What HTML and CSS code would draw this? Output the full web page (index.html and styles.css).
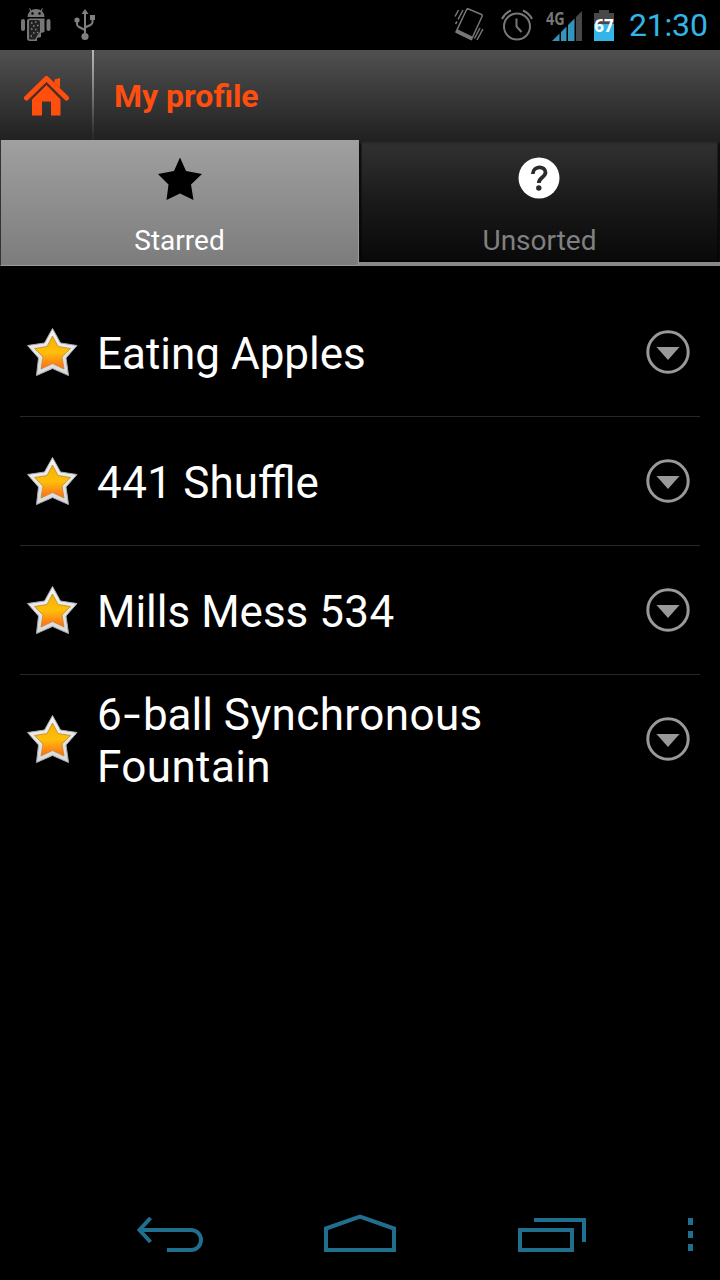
FILE: index.html
```html
<!DOCTYPE html>
<html lang="en">
  <head>
    <meta charset="UTF-8" />
    <meta name="viewport" content="width=device-width, initial-scale=1.0" />
    <title>My profile</title>
    <link rel="stylesheet" href="styles.css">
  </head>
  <body>
    <!-- shared icons -->
    <svg class="defs" width="0" height="0">
      <defs>
        <linearGradient id="gold" x1="0" y1="0" x2="0" y2="1">
          <stop offset="0" stop-color="#f2b200" />
          <stop offset="0.5" stop-color="#ffbe0a" />
          <stop offset="1" stop-color="#ff6a1c" />
        </linearGradient>
        <linearGradient id="silver" x1="0" y1="0" x2="0" y2="1">
          <stop offset="0" stop-color="#f4f4f4" />
          <stop offset="1" stop-color="#d6d8dc" />
        </linearGradient>
        <symbol id="star" viewBox="0 0 52 50">
          <path d="M26.500 1.500 L34.500 16 L51 18.500 L40 31 L42.500 48.500 L26.500 41.500 L10.500 48.500 L12.500 31 L1.500 18.500 L18.500 16 Z" fill="url(#silver)" stroke="#aaa" stroke-width="1" stroke-linejoin="round" />
          <path d="M26.500 9 L32 19.500 L44.500 21.500 L36 30 L38 42 L26.500 36.500 L15 42 L17 30 L8.500 21.500 L21 19.500 Z" fill="url(#gold)" stroke="#c08a28" stroke-width=".8" />
        </symbol>
        <symbol id="more" viewBox="0 0 44 44">
          <circle cx="22" cy="22" r="20.2" fill="none" stroke="#999" stroke-width="3" />
          <path d="M10.500 17 H33.500 L22 30 Z" fill="#999" />
        </symbol>
      </defs>
    </svg>

    <div id="status">
      <svg class="android" width="30" height="34" viewBox="0 0 30 34" fill="#777">
        <path d="M6.500 9 A8.500 8 0 0 1 23.500 9 Z" />
        <path d="M10 3 L8.500 .5 M20 3 L21.500 .5" stroke="#777" stroke-width="1.200" />
        <circle cx="11.500" cy="5.500" r="1.200" fill="#000" />
        <circle cx="18.500" cy="5.500" r="1.200" fill="#000" />
        <rect x="0" y="11" width="4" height="12" rx="2" />
        <rect x="25.500" y="11" width="4" height="12" rx="2" />
        <path d="M6 13 Q6 10.500 9 10.500 H23.500 V24 L20 25 V29 L16 30 V33 H9 Q6 33 6 30 Z" />
        <path d="M8 13 Q8 12 9 12 H17 Q19 12 19 14 V24 L16 28 L14 31.500 H9 Q8 31.500 8 30 Z" fill="#222" />
        <path d="M10 15 h1.500 M14 14 h1.500 M12 18 h1.500 M16 17.500 h1.500 M10 21 h1.500 M14 21.500 h1.500 M12 25 h1.500 M9.500 28 h1.500 M16 24.500 h1.500" stroke="#888" stroke-width="1.500" />
      </svg>
      <svg class="usb" width="22" height="34" viewBox="0 0 22 34" fill="none" stroke="#808080" stroke-width="2">
        <path d="M11 5 V27 M3 13 V16 Q3 18 5 19 L11 22 M18.500 9 V14 Q18.500 16 16.500 17 L11 19.500" />
        <path d="M11 1 L14.500 6 H7.500 Z M16 7 H21 V12 H16 Z" fill="#808080" stroke="none" />
        <circle cx="3" cy="12" r="2.600" fill="#808080" stroke="none" />
        <circle cx="11" cy="28.500" r="3.600" fill="#808080" stroke="none" />
      </svg>
      <div class="indicators">
        <svg class="vibrate" width="30" height="34" viewBox="0 0 30 34" fill="none" stroke="#777" stroke-width="1.500">
          <path d="M14.500 1 L27.500 6.500 Q28.500 7 28 8.500 L17.500 31.500 L2 24 L12.500 1.800 Q13.200 .5 14.500 1 Z" />
          <path d="M2.500 23 L18 30.500" stroke-width="4" />
          <path d="M1 8.500 L4.500 2 M4 11.500 L9 2 M1.500 16 L3 13.500 M29 21 L23 32 M26 20 L20.500 30.500" />
        </svg>
        <svg class="alarm" width="32" height="32" viewBox="0 0 32 32" fill="none" stroke="#777" stroke-width="2">
          <circle cx="16" cy="17.500" r="13" />
          <path d="M15.500 9.500 V17.500 L20.500 23 M1 10 Q4 4 10 1.500 M22 1.500 Q28 4 31 10" />
        </svg>
        <div class="signal">
          <span class="network">4G</span>
          <svg width="30" height="30" viewBox="0 0 30 30" fill="#3594bb">
            <path d="M0 30 L7.500 22.500 V30 Z M9 21 L14.500 15.500 V30 H9 Z M16 14 L22.500 7.500 V30 H16 Z" />
            <path d="M24 6 L30 0 V30 H24 Z" fill="#484848" />
          </svg>
        </div>
        <div class="battery"><span>67</span></div>
        <span class="clock">21:30</span>
      </div>
    </div>

    <div id="header">
      <div class="home">
        <svg width="46" height="42" viewBox="0 0 46 42" fill="#ff4e0d">
          <path d="M30.500 5.500 L36 4 V14 L30.500 9 Z" />
          <path d="M2.500 24 L22.500 4.500 L42.500 24" fill="none" stroke="#ff4e0d" stroke-width="5" stroke-linecap="round" stroke-linejoin="round" />
          <path d="M8 25.500 L22.500 11 L36.500 25.500 V41.500 H27 V27.500 H18 V41.500 H8 Z" />
          <path d="M6 26 L22.500 9.800 L39 26" fill="none" stroke="#5a2b18" stroke-width="1.500" />
        </svg>
      </div>
      <h1>My profile</h1>
    </div>

    <ul id="tabs">
      <li class="active">
        <svg width="44" height="44" viewBox="0 0 44 44">
          <path d="M22 .5 L28 14 L44 17 L33 27.500 L35.500 43 L22 36.500 L8.500 43 L10.500 27.500 L0 17 L16 14 Z" />
        </svg>
        <span>Starred</span>
      </li>
      <li>
        <svg width="44" height="44" viewBox="0 0 44 44">
          <circle cx="21" cy="21" r="20.500" fill="#fff" />
          <path d="M14.800 17 C15 8.500 27.500 8.500 27.500 15.500 C27.500 20 20.800 20.500 20.800 26" fill="none" stroke="#2a2a2a" stroke-width="3.800" />
          <circle cx="20.800" cy="31" r="2.700" fill="#2a2a2a" />
        </svg>
        <span>Unsorted</span>
      </li>
    </ul>

    <ul id="list">
      <li>
        <svg class="star"><use href="#star" /></svg>
        <span class="title">Eating Apples</span>
        <svg class="more"><use href="#more" /></svg>
      </li>
      <li>
        <svg class="star"><use href="#star" /></svg>
        <span class="title"><span class="wide">441</span> Shuffle</span>
        <svg class="more"><use href="#more" /></svg>
      </li>
      <li>
        <svg class="star"><use href="#star" /></svg>
        <span class="title">Mills Mess <span class="wide">534</span></span>
        <svg class="more"><use href="#more" /></svg>
      </li>
      <li>
        <svg class="star"><use href="#star" /></svg>
        <span class="title">6<span class="hyphen">-</span>ball <span class="wide">Synchronous</span> <span class="wide">Fountain</span></span>
        <svg class="more"><use href="#more" /></svg>
      </li>
    </ul>

    <div id="navbar">
      <svg class="back" width="66" height="36" viewBox="0 0 66 36">
        <path d="M3 14 H54 A10 10 0 0 1 54 34 H30" />
        <path d="M13.500 2 L2.500 14 L13.500 26" />
      </svg>
      <svg class="go-home" width="72" height="38" viewBox="0 0 72 38">
        <path d="M2 14.500 L36 2.500 L70 14.500 V36 H2 Z" />
      </svg>
      <svg class="recent" width="68" height="34" viewBox="0 0 68 34">
        <path d="M2 12 H54 V32 H2 Z M16 2 H66 V24" />
      </svg>
      <svg class="menu" width="5" height="34" viewBox="0 0 5 34">
        <path d="M2.500 0 V7 M2.500 13 V20 M2.500 26 V33" />
      </svg>
    </div>
  </body>
</html>
```
FILE: styles.css
```css
* {
  margin: 0;
  padding: 0;
  box-sizing: border-box;
}
body {
  width: 720px;
  height: 1280px;
  display: flex;
  flex-direction: column;
  overflow: hidden;
  background-color: #000;
  color: #fff;
  font-family: Roboto, "Liberation Sans", sans-serif;
}
ul li {
  list-style: none;
}
svg {
  display: block;
  flex-shrink: 0;
}
.defs {
  position: absolute;
}

/* status bar */
#status {
  height: 50px;
  display: flex;
  align-items: center;
  padding: 0 12px 0 21px;
}
.usb {
  margin-left: 23px;
}
.indicators {
  display: flex;
  align-items: center;
  margin-left: auto;
}
.alarm {
  margin-left: 17px;
}
.signal {
  position: relative;
  width: 37px;
  height: 32px;
  margin-left: 12px;
  display: flex;
  align-items: flex-end;
  justify-content: flex-end;
}
.network {
  position: absolute;
  left: 1px;
  top: 0;
  font: bold 18px/18px "Open Sans", sans-serif;
  color: #777;
  transform: scaleX(0.8);
  transform-origin: left;
}
.battery {
  width: 20px;
  height: 31px;
  margin-left: 12px;
  display: flex;
  align-items: center;
  justify-content: center;
  font: bold 17px/17px "Open Sans", sans-serif;
  background: linear-gradient(#484848, #484848) 50% 0 / 10px 3px no-repeat,
    linear-gradient(#484848 11px, #33b5e5 11px) 0 3px / 20px 28px no-repeat;
}
.clock {
  width: 79px;
  margin-left: 15px;
  font-size: 32px;
  line-height: 40px;
  letter-spacing: -0.2px;
  color: #33b5e5;
}

/* action bar */
#header {
  height: 90px;
  display: flex;
  align-items: center;
  background: linear-gradient(#505050, #212121);
}
.home {
  width: 94px;
  height: 90px;
  padding: 24px 0 0 24px;
  border-right: 2px solid;
  border-image: linear-gradient(#bbb, #777 50%, #2a2a2a 95%) 1;
}
h1 {
  margin: 1px 0 0 20px;
  font-size: 32px;
  line-height: 40px;
  color: #ff4e0d;
}

/* tabs */
#tabs {
  height: 126px;
  display: flex;
}
#tabs > li {
  width: 361px;
  display: flex;
  flex-direction: column;
  align-items: center;
  padding-top: 17px;
  font-size: 28px;
  line-height: 34px;
  color: #808080;
  background: linear-gradient(#323232, #1a1a1a 50%, #080808);
  border-bottom: 4px solid #888;
  box-shadow: inset 0 3px 3px #222, inset 2px 0 2px #000, inset -2px 0 2px #000;
}
#tabs > li > span {
  margin-top: 23px;
}
#tabs > .active {
  width: 359px;
  color: #fff;
  background: linear-gradient(#a0a0a0, #7c7c7c);
  border: solid #999;
  border-width: 0 1px 1px;
  border-left-color: #333;
  box-shadow: none;
}

/* starred patterns */
#list {
  flex: 1;
  padding: 22px 20px 0;
}
#list > li {
  height: 129px;
  display: flex;
  align-items: center;
  padding: 0 10px 0 6px;
  border-bottom: 1px solid #282828;
  font-size: 44px;
  line-height: 52px;
}
#list > li:last-child {
  border-bottom-color: transparent;
}
.title {
  width: 450px;
  margin: 4px auto 0 19px;
}
.wide {
  letter-spacing: 0.4px;
}
.hyphen {
  display: inline-block;
  margin: 0 5px 0 4px;
  transform: scaleX(1.4);
}
.star {
  width: 52px;
  height: 50px;
}
.more {
  width: 44px;
  height: 44px;
}

/* navigation bar */
#navbar {
  height: 96px;
  display: flex;
  align-items: center;
  padding: 4px 27px 0 137px;
  fill: none;
  stroke: #216f8e;
  stroke-width: 4;
}
.go-home {
  margin: 0 122px 2px 121px;
}
.recent {
  margin-top: 2px;
}
.menu {
  margin: 2px 0 0 auto;
  stroke-width: 5;
}
```
